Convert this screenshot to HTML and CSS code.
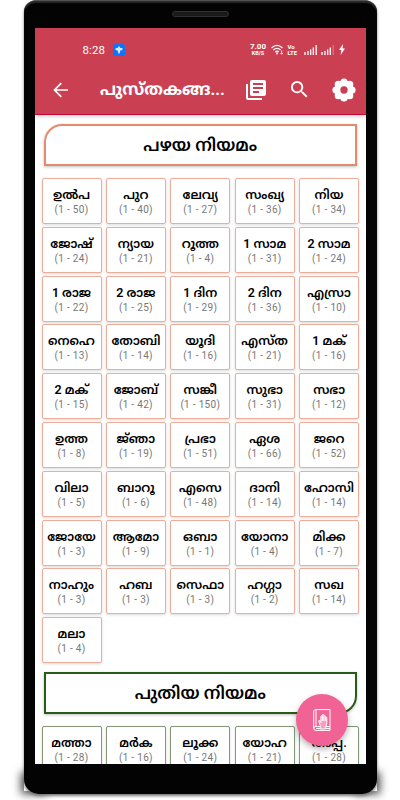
FILE: index.html
```html
<!DOCTYPE html>
<html lang="ml">
<head>
    <meta charset="UTF-8">
    <meta name="viewport" content="width=device-width, initial-scale=1.0">
    <title>പുസ്തകങ്ങൾ</title>
    <link rel="stylesheet" href="styles.css">
</head>
<body>
    <div class="phone">
        <div class="speaker"></div>
        <div class="screen">
            <header class="header">
                <div class="status">
                    <span class="time">8:28</span>
                    <svg class="app-badge" viewBox="0 0 12 12"><rect width="12" height="12" rx="2.5" fill="#0b75fb"/><path d="M6 2l1.500 2H9.400v2.200H7.500L6.600 9.500H5.400L4.500 6.200H2.600V4h1.900z" fill="#d9eaff"/></svg>
                    <div class="speed"><b>7.00</b><span>KB/S</span></div>
                    <svg class="wifi" viewBox="0 0 13 11"><g fill="none" stroke="#fff" stroke-width="1.3"><path d="M.5 4Q6 -1.2 11.500 4M2.400 6Q6 2.700 9.600 6M4.300 8Q6 6.500 7.700 8"/></g><circle cx="6" cy="9.4" r="1" fill="#fff"/><path d="M10.700 6.500v3.500M9.500 9l1.200 1.300L11.900 9" stroke="#fff" stroke-width=".8" fill="none"/></svg>
                    <div class="volte"><span>Vo</span><span>LTE</span></div>
                    <svg class="signal" viewBox="0 0 13 10"><path d="M1 7v3M4 6v4M6.700 4.500V10M9.300 2.500V10M12.200 0v10" stroke="#fff" stroke-width="1.3"/></svg>
                    <svg class="signal second" viewBox="0 0 13 10"><path d="M1 7v3M4 6v4M6.700 4.500V10M9.300 2.500V10" stroke="#fff" stroke-width="1.3"/><path d="M12.200 0v10" stroke="#dc858f" stroke-width="1"/></svg>
                    <svg class="bolt" viewBox="0 0 6 11"><path d="M4 0L0 6h2.400L1.600 11 6 4.500H3.600z" fill="#fff"/></svg>
                </div>
                <div class="toolbar">
                    <svg class="back" viewBox="0 0 16 16"><path d="M15 8H1.500M8.300 1.200L1.500 8l6.800 6.800" fill="none" stroke="#fff" stroke-width="1.7"/></svg>
                    <h1>പുസ്തകങ്ങ...</h1>
                    <svg class="library" viewBox="2 2 20 20"><path fill="#fff" d="M4 6H2v14c0 1.100.9 2 2 2h14v-2H4V6zm16-4H8c-1.100 0-2 .9-2 2v12c0 1.100.9 2 2 2h12c1.100 0 2-.9 2-2V4c0-1.100-.9-2-2-2zm-1 9H9V9h10v2zm-4 4H9v-2h6v2zm4-8H9V5h10v2z"/></svg>
                    <svg class="search" viewBox="3 3 18 18"><path fill="#fff" d="M15.500 14h-.79l-.28-.27A6.471 6.471 0 0 0 16 9.500 6.500 6.500 0 1 0 9.500 16c1.610 0 3.090-.59 4.230-1.570l.27.28v.79l5 4.990L20.490 19l-4.990-5zm-6 0C7.010 14 5 11.990 5 9.500S7.010 5 9.500 5 14 7.010 14 9.500 11.990 14 9.500 14z"/></svg>
                    <svg class="gear" viewBox="-12 -12 24 24"><g fill="#fff"><circle r="9.800"/><circle cx="0" cy="-8" r="3.600"/><circle cx="5.700" cy="-5.700" r="3.600"/><circle cx="8" cy="0" r="3.600"/><circle cx="5.700" cy="5.700" r="3.600"/><circle cx="0" cy="8" r="3.600"/><circle cx="-5.700" cy="5.700" r="3.600"/><circle cx="-8" cy="0" r="3.600"/><circle cx="-5.700" cy="-5.700" r="3.600"/></g><circle r="3.700" fill="#ca4052"/></svg>
                </div>
            </header>

            <main>
                <h2 class="section old">പഴയ നിയമം</h2>
                <div class="books">
                    <div class="book"><b>ഉൽപ</b><span>(1 - 50)</span></div>
                    <div class="book"><b>പുറ</b><span>(1 - 40)</span></div>
                    <div class="book"><b>ലേവ്യ</b><span>(1 - 27)</span></div>
                    <div class="book"><b>സംഖ്യ</b><span>(1 - 36)</span></div>
                    <div class="book"><b>നിയ</b><span>(1 - 34)</span></div>
                    <div class="book"><b>ജോഷ്</b><span>(1 - 24)</span></div>
                    <div class="book"><b>ന്യായ</b><span>(1 - 21)</span></div>
                    <div class="book"><b>റൂത്ത</b><span>(1 - 4)</span></div>
                    <div class="book"><b>1 സാമ</b><span>(1 - 31)</span></div>
                    <div class="book"><b>2 സാമ</b><span>(1 - 24)</span></div>
                    <div class="book"><b>1 രാജ</b><span>(1 - 22)</span></div>
                    <div class="book"><b>2 രാജ</b><span>(1 - 25)</span></div>
                    <div class="book"><b>1 ദിന</b><span>(1 - 29)</span></div>
                    <div class="book"><b>2 ദിന</b><span>(1 - 36)</span></div>
                    <div class="book"><b>എസ്രാ</b><span>(1 - 10)</span></div>
                    <div class="book"><b>നെഹെ</b><span>(1 - 13)</span></div>
                    <div class="book"><b>തോബി</b><span>(1 - 14)</span></div>
                    <div class="book"><b>യൂദി</b><span>(1 - 16)</span></div>
                    <div class="book"><b>എസ്ത</b><span>(1 - 21)</span></div>
                    <div class="book"><b>1 മക്</b><span>(1 - 16)</span></div>
                    <div class="book"><b>2 മക്</b><span>(1 - 15)</span></div>
                    <div class="book"><b>ജോബ്</b><span>(1 - 42)</span></div>
                    <div class="book"><b>സങ്കീ</b><span>(1 - 150)</span></div>
                    <div class="book"><b>സുഭാ</b><span>(1 - 31)</span></div>
                    <div class="book"><b>സഭാ</b><span>(1 - 12)</span></div>
                    <div class="book"><b>ഉത്ത</b><span>(1 - 8)</span></div>
                    <div class="book"><b>ജ്&zwnj;ഞാ</b><span>(1 - 19)</span></div>
                    <div class="book"><b>പ്രഭാ</b><span>(1 - 51)</span></div>
                    <div class="book"><b>ഏശ</b><span>(1 - 66)</span></div>
                    <div class="book"><b>ജറെ</b><span>(1 - 52)</span></div>
                    <div class="book"><b>വിലാ</b><span>(1 - 5)</span></div>
                    <div class="book"><b>ബാറൂ</b><span>(1 - 6)</span></div>
                    <div class="book"><b>എസെ</b><span>(1 - 48)</span></div>
                    <div class="book"><b>ദാനി</b><span>(1 - 14)</span></div>
                    <div class="book"><b>ഹോസി</b><span>(1 - 14)</span></div>
                    <div class="book"><b>ജോയേ</b><span>(1 - 3)</span></div>
                    <div class="book"><b>ആമോ</b><span>(1 - 9)</span></div>
                    <div class="book"><b>ഒബാ</b><span>(1 - 1)</span></div>
                    <div class="book"><b>യോനാ</b><span>(1 - 4)</span></div>
                    <div class="book"><b>മിക്ക</b><span>(1 - 7)</span></div>
                    <div class="book"><b>നാഹും</b><span>(1 - 3)</span></div>
                    <div class="book"><b>ഹബ</b><span>(1 - 3)</span></div>
                    <div class="book"><b>സെഫാ</b><span>(1 - 3)</span></div>
                    <div class="book"><b>ഹഗ്ഗാ</b><span>(1 - 2)</span></div>
                    <div class="book"><b>സഖ</b><span>(1 - 14)</span></div>
                    <div class="book"><b>മലാ</b><span>(1 - 4)</span></div>
                </div>

                <h2 class="section new">പുതിയ നിയമം</h2>
                <div class="books green">
                    <div class="book"><b>മത്താ</b><span>(1 - 28)</span></div>
                    <div class="book"><b>മർക</b><span>(1 - 16)</span></div>
                    <div class="book"><b>ലൂക്ക</b><span>(1 - 24)</span></div>
                    <div class="book"><b>യോഹ</b><span>(1 - 21)</span></div>
                    <div class="book"><b>അപ്പ.</b><span>(1 - 28)</span></div>
                </div>
            </main>

            <div class="fab">
                <svg viewBox="0 0 18 22"><g fill="none" stroke="#fff" stroke-width="1"><path d="M3 .6h14v17H3M3 .6C1.300.6.7 1.500.7 3v16c0 1.500.8 2.400 2.300 2.400h14v-3.800M3 .6v17C1.500 17.600.7 18.300.7 19.500M3 19.500h14"/><path d="M7.200 20v-3.500L5.800 12.500c-.4-1.300.8-1.600 1.300-.5l.8 1.500V7.500c0-1 1.400-1 1.400 0V6.200c0-1.100 1.500-1.100 1.500 0v1c0-1.100 1.500-1 1.500 0v1.500c0-1 1.500-1 1.500 0v6.300l-1 2.500V20z" fill="#f3a0be"/><path d="M9.300 7.500v4.500M10.800 7v5M12.300 8v4"/></g></svg>
            </div>
        </div>
    </div>
</body>
</html>
```
FILE: styles.css
```css
* { margin: 0; padding: 0; box-sizing: border-box; }
body {
    width: 400px; height: 800px; padding-left: 24px; overflow: hidden;
    background: #fff; font-family: Roboto, 'Noto Sans Malayalam', 'Noto Sans', sans-serif;
}
svg { display: block; flex: none; }

.phone {
    width: 353px; height: 794px; padding: 27px 11px 0 10.500px;
    background: #030303; border-radius: 12px 12px 15px 15px;
    border-top: 1px solid #555; position: relative;
    box-shadow: inset 0 2px 1px #292929, 0 2px 3px #777;
}
.phone::before, .phone::after {
    content: ""; position: absolute; bottom: 3px; width: 20px; height: 16px; z-index: -1;
    box-shadow: 0 0 9px 3px rgba(0, 0, 0, 0.7);
}
.phone::before { left: 0; }
.phone::after { right: 0; }
.speaker {
    position: absolute; top: 10px; left: 148px; width: 57px; height: 6px;
    border-radius: 3px; border: 1px solid #303030; background: #191919;
}
.screen { position: relative; height: 736px; overflow: hidden; background: #fff; }

.header { height: 87px; background: #ca4052; border-bottom: 1px solid #bd0737; box-shadow: 0 1px 4px rgba(0, 0, 0, 0.25); color: #fff; }
.status { display: flex; align-items: center; height: 43px; padding-left: 48px; }
.time { font-size: 11.500px; width: 30.500px; letter-spacing: 0.1px; }
.app-badge { width: 12px; height: 12px; margin-right: 124.500px; }
.speed { width: 17px; text-align: center; margin-right: 4px; }
.speed b, .speed span { display: block; }
.speed b { font-size: 8px; line-height: 7px; }
.speed span { font-size: 5.500px; line-height: 6px; font-weight: 700; }
.wifi { width: 13px; height: 11px; margin-right: 4px; }
.volte { width: 12px; font-size: 6px; line-height: 6px; font-weight: 700; margin-right: 4.500px; }
.volte span { display: block; }
.signal { width: 13px; height: 10px; margin-right: 4px; }
.bolt { width: 6px; height: 11px; margin-left: 1px; }

.toolbar { display: flex; align-items: center; height: 37px; }
.back { width: 16px; height: 16px; margin-left: 18.500px; }
.toolbar h1 { width: 126px; margin-left: 31px; font-size: 16.500px; line-height: 24px; font-weight: 700; white-space: nowrap; }
.library { width: 20px; height: 20px; margin-left: 20px; }
.search { width: 17px; height: 17px; margin-left: 25px; }
.gear { width: 24px; height: 24px; margin-left: 24px; }

main { padding: 9px 7px 0; }
.section {
    height: 42px; margin: 0 2.500px; border: 2px solid #e58b6d;
    font-size: 17.300px; line-height: 39px; font-weight: 600;
    text-align: center; color: #000; box-shadow: 0 1px 3px rgba(0, 0, 0, 0.25);
    white-space: nowrap;
}
.old { border-radius: 18px 0 0 0; }
.new { border-color: #285b15; border-radius: 0 0 18px 0; margin-top: 9px; }

.books { display: grid; grid-template-columns: repeat(5, 60px); grid-auto-rows: 46px; gap: 2.800px 4.400px; margin-top: 12px; }
.book {
    display: flex; flex-direction: column; align-items: center; padding-top: 8px;
    border: 1px solid #ecad9b; border-radius: 2px; background: #fff;
    box-shadow: 0 1px 3px rgba(0, 0, 0, 0.15); white-space: nowrap;
}
.book b { height: 16px; font-size: 12.500px; line-height: 16px; font-weight: 600; color: #000; }
.book span { font-size: 10px; line-height: 14px; color: #777; letter-spacing: 0.3px; }
.green .book { border-color: #849878; }

.fab {
    position: absolute; right: 18.500px; bottom: 18.500px; width: 52px; height: 52px;
    display: flex; align-items: center; justify-content: center;
    border-radius: 50%; background: #f26395; box-shadow: 0 3px 6px rgba(0, 0, 0, 0.3);
}
.fab svg { width: 18px; height: 22px; }
```
